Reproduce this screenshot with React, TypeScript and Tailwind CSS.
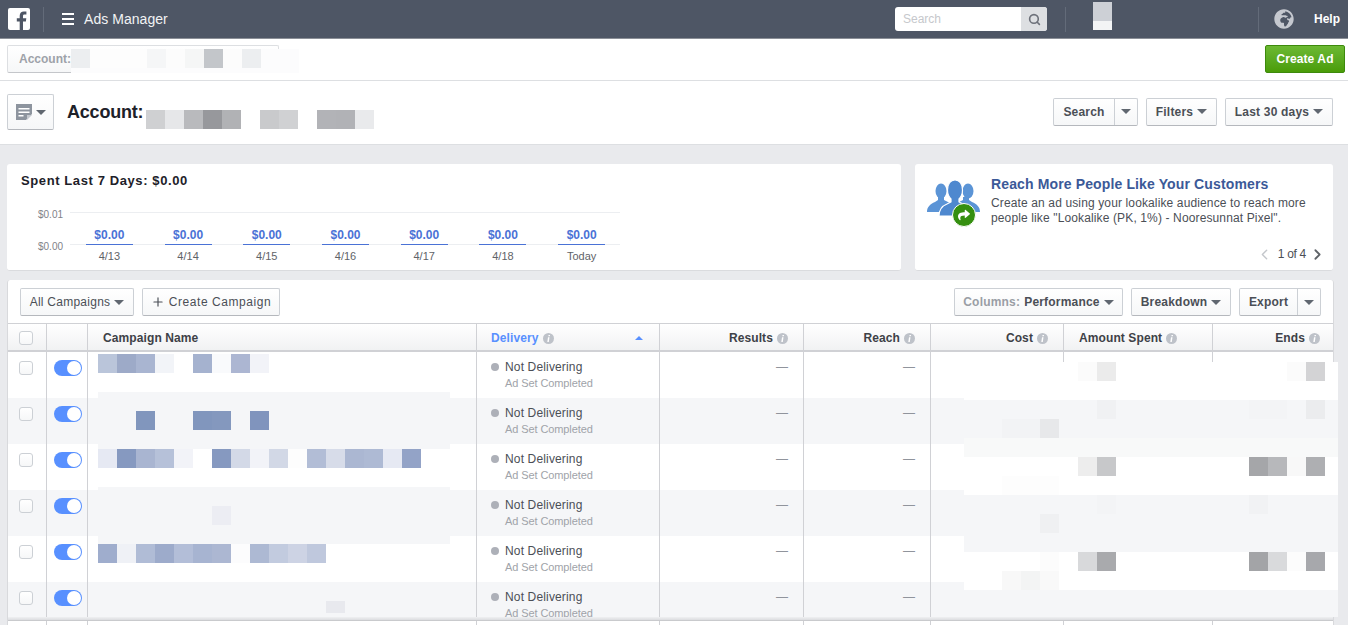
import React from 'react';
import { FaGlobeAfrica, FaShare } from 'react-icons/fa';
import { Search, Plus, ChevronLeft, ChevronRight } from 'lucide-react';

const GRID = 'grid grid-cols-[39px_41px_389px_183px_144px_127px_133px_149px_120px]';

const Caret = ({ className = 'text-[#606770]' }: { className?: string }) => (
  <svg width="10" height="5" viewBox="0 0 10 5" className={className}>
    <path d="M0 0h10L5 5z" fill="currentColor" />
  </svg>
);

const Info = () => (
  <svg width="11" height="11" viewBox="0 0 11 11" className="shrink-0">
    <circle cx="5.5" cy="5.5" r="5.5" fill="#bec2c9" />
    <path d="M5.600 2h1.500l-.3 1.300H5.300zM5 4.300h1.500L5.800 9H4.300z" fill="#fff" />
  </svg>
);

const Button = ({ children, className = '' }: { children: React.ReactNode; className?: string }) => (
  <div className={`flex h-[28px] items-center justify-center rounded-[2px] border border-[#ccd0d5] border-b-[#b5b8bd] bg-gradient-to-b from-white to-[#f6f7f8] text-[12px] tracking-[0.2px] text-[#4b4f56] ${className}`}>
    {children}
  </div>
);

const Checkbox = () => (
  <div className="h-[14px] w-[14px] rounded-[3px] border border-[#ccd0d5] bg-gradient-to-b from-white to-[#f6f7f8]" />
);

const Toggle = () => (
  <div className="flex h-[16px] w-[28px] items-center justify-end rounded-full bg-[#5890ff] pr-[1px]">
    <div className="h-[14px] w-[14px] rounded-full bg-white" />
  </div>
);

const Th = ({ label, className = '' }: { label: string; className?: string }) => (
  <div className={`flex items-center gap-[4px] border-r border-[#d0d1d5] text-[12px] font-bold tracking-[0.1px] text-[#3e4147] ${className}`}>
    <span>{label}</span>
    <Info />
  </div>
);

const Row = ({ shaded }: { shaded: boolean }) => {
  const cell = 'h-[46px] border-r border-[#d0d1d5]';
  const dash = `${cell} flex justify-end pr-[15px] pt-[6px] text-[12px] text-[#90949c]`;
  return (
    <div className={`${GRID} ${shaded ? 'bg-[#f5f6f8]' : 'bg-white'}`}>
      <div className={`${cell} pl-[11px] pt-[9px]`}>
        <Checkbox />
      </div>
      <div className={`${cell} pl-[7px] pt-[8px]`}>
        <Toggle />
      </div>
      <div className={cell} />
      <div className={`${cell} pl-[14px] pt-[7px]`}>
        <div className="flex h-[16px] items-center gap-[6px] text-[12px] tracking-[0.15px] text-[#4b4f56]">
          <span className="h-[8px] w-[8px] rounded-full bg-[#adb0b8]" />
          Not Delivering
        </div>
        <div className="mt-[1px] pl-[14px] text-[11px] leading-[14px] tracking-[-0.1px] text-[#a0a3a9]">Ad Set Completed</div>
      </div>
      <div className={dash}>—</div>
      <div className={dash}>—</div>
      <div className={cell} />
      <div className={cell} />
      <div className="h-[46px]" />
    </div>
  );
};

const Spend = ({ label }: { label: string }) => (
  <div className="flex flex-col items-center">
    <div className="text-[12px] font-bold leading-[16px] text-[#4a72d6]">$0.00</div>
    <div className="mt-[1px] h-[1px] w-[47px] bg-[#4a72d6]" />
    <div className="mt-[5px] text-[11px] leading-[13px] text-[#5f6368]">{label}</div>
  </div>
);

// blurred-out pieces of the screenshot, they sit on top of the page
type Patch = [number, number, number, number, string];

const strip = (x: number, y: number, colors: string[]): Patch[] =>
  colors.map((c, i) => [x + i * 19, y, 19, 19, c] as Patch);

const patches: Patch[] = [
  [71, 49, 228, 24, '#fcfcfd'],
  ...strip(71, 49, ['#eceef0', '#fdfdfd', '#fdfdfd', '#fdfdfd', '#f5f6f7', '#fcfcfc', '#f5f6f6', '#c3c6ca', '#fcfcfc', '#eceef0']),
  ...strip(146, 110, ['#cfd0d2', '#e6e7e9', '#b9babd', '#97989c', '#b1b2b5', '#ffffff', '#c9cacc', '#d0d1d3', '#ffffff', '#b2b3b7', '#b1b2b6', '#e9eaec']),
  [1093, 2, 19, 19, '#cdd0d6'],
  [1093, 21, 19, 9, '#f3f4f5'],
  ...strip(98, 354, ['#bac5da', '#9daac8', '#a9b5d1', '#f2f4f8', '#ffffff', '#a5b2cf', '#f9fafc', '#acb6d2', '#f2f3f8']),
  [98, 392, 352, 57, '#f5f6f8'],
  [136, 411, 19, 19, '#8196bd'],
  [193, 411, 19, 19, '#8196bd'],
  [212, 411, 19, 19, '#8498be'],
  [250, 411, 19, 19, '#8094bd'],
  ...strip(98, 449, ['#e6e9f3', '#8699c0', '#a9b5d1', '#b6c1d9', '#f2f3f8', '#ffffff', '#8699c0', '#d3d9e7', '#f2f3f8', '#d2d8e6', '#fdfdfd', '#b2bdd6', '#d7dce9', '#abb7d2', '#aebad4', '#e6e9f3', '#93a3c7']),
  [98, 487, 352, 57, '#f5f6f8'],
  [212, 506, 19, 19, '#ecedf3'],
  ...strip(98, 544, ['#9fadcd', '#eff1f6', '#b0bcd6', '#9dabcb', '#b3bed8', '#a7b4d1', '#acb7d2', '#fcfcfd', '#adb9d3', '#c2cbdf', '#cdd3e4', '#bfc8dd']),
  [326, 601, 19, 12, '#e8e9ee'],
  [964, 362, 374, 38, '#ffffff'],
  [964, 400, 374, 38, '#f5f6f8'],
  [964, 438, 374, 19, '#f8f9f9'],
  [964, 457, 374, 38, '#ffffff'],
  [964, 495, 374, 57, '#f5f6f8'],
  [964, 552, 374, 38, '#ffffff'],
  [964, 590, 374, 27, '#f5f6f8'],
  ...strip(1078, 362, ['#fbfbfb', '#ebebeb']),
  ...strip(1287, 362, ['#fbfbfb', '#d3d3d5']),
  [1097, 400, 19, 19, '#f0f1f3'],
  ...strip(1249, 400, ['#f3f4f6', '#f3f4f6']),
  [1306, 400, 19, 19, '#ebecee'],
  ...strip(1002, 419, ['#f2f3f5', '#f2f3f5', '#e7e8ea']),
  ...strip(1078, 457, ['#ededed', '#c7c8ca']),
  ...strip(1249, 457, ['#a5a6a9', '#b7b8bb', '#f8f8f8', '#aeafb2']),
  ...strip(1002, 476, ['#fdfdfd', '#fdfdfd', '#fdfdfd']),
  [1097, 495, 19, 19, '#f3f4f6'],
  [1249, 495, 19, 19, '#f1f2f4'],
  [1040, 514, 19, 19, '#eff0f2'],
  [1040, 552, 19, 19, '#fcfcfc'],
  ...strip(1078, 552, ['#d8d9db', '#a9aaad']),
  ...strip(1249, 552, ['#a3a4a7', '#d9dadc', '#fcfcfc', '#a7a8ac']),
  ...strip(1002, 571, ['#f8f8f8', '#f3f4f4', '#f9f9f9']),
];

const PeopleIcon = () => (
  <div className="relative h-[47px] w-[54px]">
    <svg width="54" height="36" viewBox="0 0 54 36" className="absolute left-0 top-0">
      <g fill="#5b94d6">
        <ellipse cx="14" cy="11" rx="5.500" ry="7.500" />
        <path d="M0 32c0-5 3-8 8-10l3-2v-3h6v3l6 3v9z" />
        <ellipse cx="41" cy="11" rx="5.500" ry="7.500" />
        <path d="M53 32c0-5-3-8-8-10l-3-2v-3h-6v3l-6 3v9z" />
      </g>
      <path
        d="M12 36c0-7 3-10 8-12l4-2v-3c-2-2-3.500-5-3.500-9 0-6 3-10 7.500-10s7.500 4 7.500 10c0 4-1.500 7-3.500 9v3l4 2c5 2 8 5 8 12z"
        fill="#4e88cf"
        stroke="#fff"
        strokeWidth="1.200"
      />
    </svg>
    <div className="absolute bottom-0 left-[25px] flex h-[24px] w-[24px] items-center justify-center rounded-full border border-white bg-[#358f10] text-white">
      <FaShare size={12} />
    </div>
  </div>
);

export default function App() {
  return (
    <div className="relative h-[625px] w-[1348px] overflow-hidden bg-[#e9eaed] font-['Liberation_Sans',Arial,sans-serif]">
      {/* top bar */}
      <header className="flex h-[39px] items-center border-b border-[#8b8f97] bg-[#4e5665] text-white">
        <svg width="22" height="22" viewBox="0 0 22 22" className="ml-[8px]">
          <rect width="22" height="22" rx="2" fill="#fff" />
          <path d="M15 22v-8.500h2.900l.4-3.300H15V8.100c0-1 .3-1.600 1.600-1.600h1.800V3.500c-.3 0-1.300-.1-2.500-.1-2.500 0-4.200 1.500-4.200 4.300v2.500H8.800v3.300h2.900V22z" fill="#4e5665" />
        </svg>
        <div className="ml-[13px] h-[25px] w-[1px] bg-[#636b79]" />
        <div className="ml-[18px] flex h-[12px] w-[12px] flex-col justify-between">
          <div className="h-[2px] bg-white" />
          <div className="h-[2px] bg-white" />
          <div className="h-[2px] bg-white" />
        </div>
        <div className="ml-[10px] w-[85px] text-[14px] tracking-[0.05px] text-[#f1f2f4]">Ads Manager</div>
        <div className="ml-[726px] flex h-[24px] w-[152px] overflow-hidden rounded-[3px] bg-white">
          <div className="flex-1 pl-[8px] text-[12px] leading-[24px] text-[#c6c8cc]">Search</div>
          <div className="flex w-[26px] items-center justify-center bg-[#dddfe2] text-[#6d717a]">
            <Search size={13} strokeWidth={3} />
          </div>
        </div>
        <div className="ml-[18px] h-[25px] w-[1px] bg-[#636b79]" />
        <div className="ml-[192px] h-[25px] w-[1px] bg-[#636b79]" />
        <FaGlobeAfrica size={20} className="ml-[15px] text-[#c5c8cf]" />
        <div className="ml-[20px] text-[12px] font-bold text-white">Help</div>
      </header>

      {/* account bar */}
      <div className="flex h-[42px] items-center justify-between border-b border-[#dddfe2] bg-white pb-[1px] pl-[7px] pr-[3px]">
        <div className="flex h-[28px] w-[272px] items-center rounded-[2px] border border-[#dddfe2] border-b-[#c4c6ca] bg-gradient-to-b from-white to-[#f6f7f8] pl-[11px] text-[12px] font-bold text-[#9ea2a9]">
          Account:
        </div>
        <div className="flex h-[28px] w-[80px] items-center justify-center rounded-[2px] border border-[#3d8a0c] bg-gradient-to-b from-[#6cb932] to-[#4a9c06] text-[12px] font-bold tracking-[0.1px] text-white">
          Create Ad
        </div>
      </div>

      {/* page title */}
      <div className="flex h-[64px] items-center justify-between border-b border-[#dddfe2] bg-white pl-[7px] pr-[15px]">
        <div className="flex items-center">
          <div className="mt-[-1px] flex h-[36px] w-[47px] items-center justify-center gap-[4px] rounded-[2px] border border-[#ccd0d5] border-b-[#b5b8bd] bg-gradient-to-b from-white to-[#f6f7f8]">
            <svg width="16" height="16" viewBox="0 0 16 16">
              <path d="M0 0h16v10l-6 6H0z" fill="#8d949e" />
              <path d="M2.500 4h11v1.500h-11zM2.500 7.500h11V9h-11zM2.500 11h5v1.500h-5z" fill="#fff" />
              <path d="M11 11h5l-5 5z" fill="#c4c8ce" />
            </svg>
            <Caret />
          </div>
          <div className="ml-[13px] mt-[-1px] text-[18px] font-bold tracking-[-0.2px] text-[#1d2129]">Account:</div>
        </div>
        <div className="mt-[-2px] flex items-center gap-[8px] font-bold">
          <Button className="w-[85px]">
            <span className="flex h-full flex-1 items-center justify-center border-r border-[#ccd0d5]">Search</span>
            <span className="flex w-[22px] justify-center"><Caret /></span>
          </Button>
          <Button className="w-[71px] gap-[4px]">Filters <Caret /></Button>
          <Button className="w-[108px] gap-[4px]">Last 30 days <Caret /></Button>
        </div>
      </div>

      {/* insight cards */}
      <div className="ml-[7px] mt-[19px] flex w-[1327px] gap-[14px]">
        <section className="h-[107px] w-[894px] rounded-[3px] border-b border-[#dadbde] bg-white">
          <div className="pl-[14px] pt-[9px] text-[13px] font-bold leading-[16px] tracking-[0.6px] text-[#1d2129]">Spent Last 7 Days: $0.00</div>
          <div className="relative ml-[31px] mt-[23px]">
            <div className="flex h-[32px] items-start text-[10px] text-[#7f8288]">
              <span className="mt-[-4px] w-[32px] leading-[13px]">$0.01</span>
              <div className="h-[1px] w-[550px] bg-[#eceef1]" />
            </div>
            <div className="flex items-start text-[10px] text-[#7f8288]">
              <span className="mt-[-4px] w-[32px] leading-[13px]">$0.00</span>
              <div className="h-[1px] w-[550px] bg-[#eceef1]" />
            </div>
            <div className="absolute left-[32px] top-[15px] grid w-[551px] grid-cols-7">
              {['4/13', '4/14', '4/15', '4/16', '4/17', '4/18', 'Today'].map((d) => (
                <Spend key={d} label={d} />
              ))}
            </div>
          </div>
        </section>
        <section className="flex h-[107px] w-[418px] rounded-[3px] border-b border-[#dadbde] bg-white">
          <div className="ml-[12px] mt-[16px]">
            <PeopleIcon />
          </div>
          <div className="ml-[10px] flex flex-1 flex-col pt-[11px]">
            <div className="text-[14px] font-bold leading-[18px] tracking-[0.13px] text-[#3b5998]">Reach More People Like Your Customers</div>
            <div className="mt-[3px] text-[12px] leading-[15px] tracking-[0.13px] text-[#4b4f56]">
              Create an ad using your lookalike audience to reach more<br />people like "Lookalike (PK, 1%) - Nooresunnat Pixel".
            </div>
            <div className="mt-[19px] flex items-center justify-end gap-[2px] pr-[7px] text-[12px] text-[#4b4f56]">
              <ChevronLeft size={17} className="text-[#c4c7cc]" />
              <span className="ml-[3px] mr-[1px] tracking-[-0.3px]">1 of 4</span>
              <ChevronRight size={17} strokeWidth={2.5} className="text-[#5f6368]" />
            </div>
          </div>
        </section>
      </div>

      {/* campaigns table */}
      <section className="ml-[7px] mt-[9px] w-[1327px] rounded-t-[3px] border-x border-[#d8d9dc] bg-white">
        <div className="flex h-[43px] items-center justify-between pl-[12px] pr-[12px] pt-[1px]">
          <div className="flex gap-[8px]">
            <Button className="w-[114px] gap-[4px] tracking-[0.25px]">All Campaigns <Caret /></Button>
            <Button className="w-[138px] gap-[4px] tracking-[0.55px]"><Plus size={14} strokeWidth={2} /> Create Campaign</Button>
          </div>
          <div className="flex gap-[8px] font-bold">
            <Button className="w-[169px] gap-[4px]"><span className="text-[#9a9ea5]">Columns:</span> Performance <Caret /></Button>
            <Button className="w-[100px] gap-[4px]">Breakdown <Caret /></Button>
            <Button className="w-[82px]">
              <span className="flex h-full flex-1 items-center justify-center border-r border-[#ccd0d5]">Export</span>
              <span className="flex w-[22px] justify-center"><Caret /></span>
            </Button>
          </div>
        </div>

        <div className={`${GRID} h-[29px] border-y border-y-[#d0d1d5] border-b-2 bg-gradient-to-b from-white to-[#f1f2f3]`}>
          <div className="flex items-center border-r border-[#d0d1d5] pl-[11px] pt-[2px]"><Checkbox /></div>
          <div className="border-r border-[#d0d1d5]" />
          <div className="flex items-center border-r border-[#d0d1d5] pl-[15px] pt-[2px] text-[12px] font-bold tracking-[0.1px] text-[#3e4147]">Campaign Name</div>
          <div className="flex items-center gap-[4px] border-r border-[#d0d1d5] pl-[14px] pr-[16px] pt-[2px] text-[12px] font-bold tracking-[0.1px] text-[#5890ff]">
            Delivery <Info />
            <svg width="8" height="4" viewBox="0 0 8 4" className="ml-auto"><path d="M0 4l4-4 4 4z" fill="#5890ff" /></svg>
          </div>
          <Th label="Results" className="justify-end pr-[15px] pt-[2px]" />
          <Th label="Reach" className="justify-end pr-[15px] pt-[2px]" />
          <Th label="Cost" className="justify-end pr-[15px] pt-[2px]" />
          <Th label="Amount Spent" className="pl-[15px] pt-[2px]" />
          <Th label="Ends" className="justify-end border-r-0 pr-[13px] pt-[2px]" />
        </div>

        <div className="h-[265px] overflow-hidden">
          {[false, true, false, true, false, true].map((shaded, i) => (
            <Row key={i} shaded={shaded} />
          ))}
        </div>
        <div className="h-[4px] border-b border-[#c9cacd] bg-gradient-to-b from-[#eff0f2] to-[#dcdde0]" />
        <div className={`${GRID} h-[4px]`}>
          <div className="border-r border-[#d0d1d5]" />
          <div className="border-r border-[#d0d1d5]" />
          <div className="border-r border-[#d0d1d5]" />
          <div className="border-r border-[#d0d1d5]" />
          <div className="border-r border-[#d0d1d5]" />
          <div className="border-r border-[#d0d1d5]" />
          <div className="border-r border-[#d0d1d5]" />
          <div className="border-r border-[#d0d1d5]" />
        </div>
      </section>

      {patches.map(([x, y, w, h, c], i) => (
        <div key={i} className="absolute" style={{ left: x, top: y, width: w, height: h, background: c }} />
      ))}
    </div>
  );
}
